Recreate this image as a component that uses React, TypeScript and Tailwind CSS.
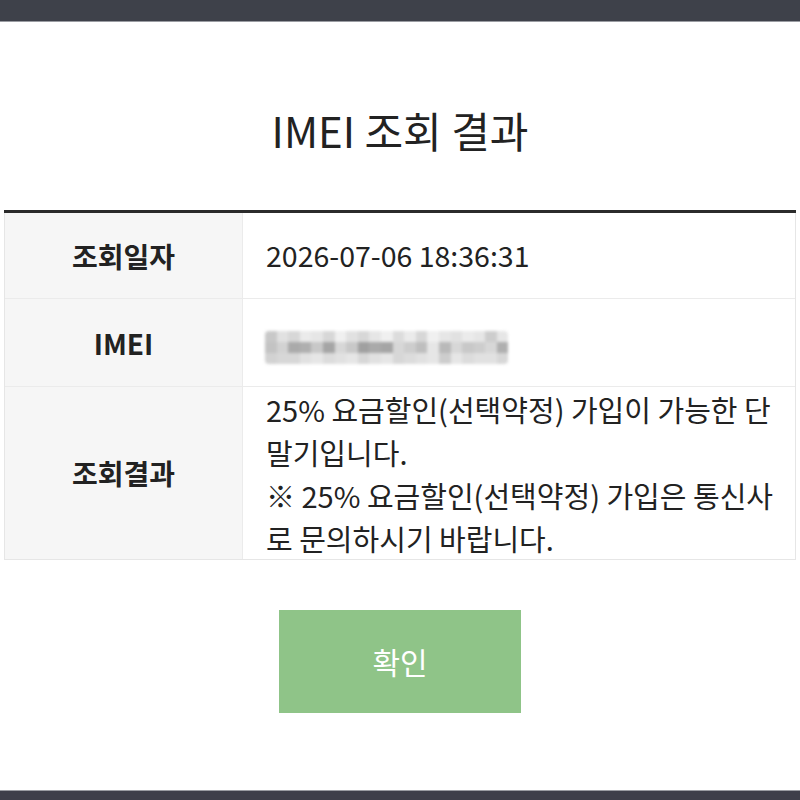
const FONT = { fontFamily: '"Noto Sans CJK KR", "Noto Sans", sans-serif' };

// mosaic cells for the masked IMEI value, one grey shade per cell
const MOSAIC: number[][] = [
  [200, 225, 215, 235, 230, 215, 240, 225, 215, 230, 240, 220, 235, 215, 240, 230, 225, 235, 230, 205, 230],
  [195, 210, 170, 175, 200, 165, 215, 200, 160, 170, 165, 215, 205, 190, 230, 185, 215, 200, 205, 215, 175],
  [210, 215, 215, 225, 230, 220, 225, 230, 215, 225, 230, 215, 220, 225, 230, 205, 230, 220, 225, 225, 215],
];

function Mosaic() {
  return (
    <div className="flex flex-col blur-[1.5px] rounded-sm overflow-hidden">
      {MOSAIC.map((row, r) => (
        <div key={r} className="flex">
          {row.map((v, c) => (
            <div
              key={c}
              className="w-[11.6px] h-[11px]"
              style={{ backgroundColor: `rgb(${v},${v},${v})` }}
            />
          ))}
        </div>
      ))}
    </div>
  );
}

export default function App() {
  return (
    <div className="h-[800px] w-[800px] flex flex-col bg-white text-[#222]" style={FONT}>
      <div className="h-[22px] bg-[#3e414a] border-b border-[#9a9ca2]" />
      <div className="flex-1 flex flex-col">
        <h1 className="mt-[76px] text-center text-[42px] leading-[64px] font-normal text-[#222]">
          IMEI 조회 결과
        </h1>
        <div className="mt-[48px] ml-[4px] mr-[4px] border-t-[3px] border-[#2b2b2b]">
          <div className="grid grid-cols-[238px_1fr] border-l border-r border-b border-[#e6e6e6]">
            <div className="h-[86px] bg-[#f6f6f6] border-r border-b border-[#ebebeb] flex items-center justify-center text-[28px] font-semibold text-[#222]">
              조회일자
            </div>
            <div className="h-[86px] border-b border-[#ebebeb] flex items-center pl-[23px] text-[28.5px] text-[#222]">
              2026-07-06 18:36:31
            </div>
            <div className="h-[88px] bg-[#f6f6f6] border-r border-b border-[#ebebeb] flex items-center justify-center text-[28px] font-semibold text-[#222]">
              IMEI
            </div>
            <div className="h-[88px] border-b border-[#ebebeb] flex items-center pl-[22px] pt-[10px]">
              <Mosaic />
            </div>
            <div className="h-[172px] bg-[#f6f6f6] border-r border-[#ebebeb] flex items-center justify-center text-[28px] font-semibold text-[#222]">
              조회결과
            </div>
            <div className="h-[172px] pl-[23px] pr-[12px] pt-[1px] text-[29px] leading-[43px] text-[#222] break-all">
              <p>25% 요금할인(선택약정) 가입이 가능한 단말기입니다.</p>
              <p>※ 25% 요금할인(선택약정) 가입은 통신사로 문의하시기 바랍니다.</p>
            </div>
          </div>
        </div>
        <div className="mt-[50px] flex justify-center">
          <button className="w-[242px] h-[103px] bg-[#8fc488] text-white text-[30px]">
            확인
          </button>
        </div>
      </div>
      <div className="h-[10px] bg-[#3e3f4a] border-t border-[#9a9ca2]" />
    </div>
  );
}
